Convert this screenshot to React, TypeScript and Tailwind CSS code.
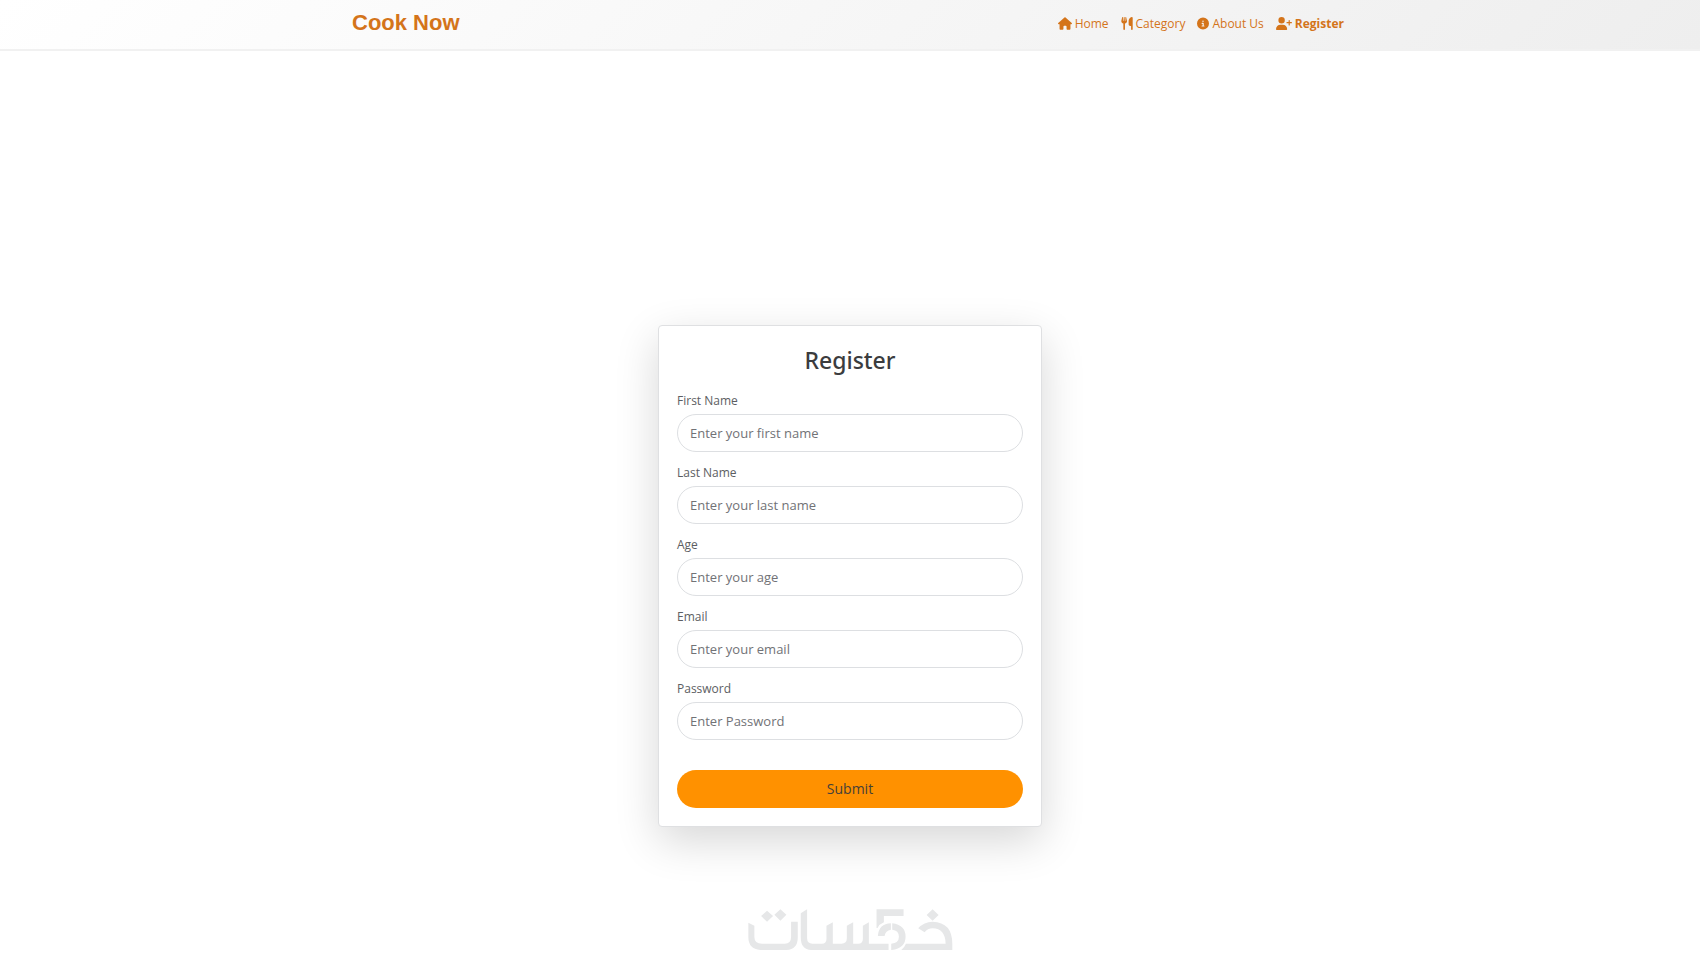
import { FaCircleInfo, FaHouse, FaUserPlus, FaUtensils } from "react-icons/fa6";

const links = [
  { label: "Home", Icon: FaHouse, iconWidth: "w-3.5", active: false },
  { label: "Category", Icon: FaUtensils, iconWidth: "w-3", active: false },
  { label: "About Us", Icon: FaCircleInfo, iconWidth: "w-3", active: false },
  { label: "Register", Icon: FaUserPlus, iconWidth: "w-4", active: true },
];

const fields = [
  { id: "first-name", label: "First Name", placeholder: "Enter your first name", type: "text" },
  { id: "last-name", label: "Last Name", placeholder: "Enter your last name", type: "text" },
  { id: "age", label: "Age", placeholder: "Enter your age", type: "text" },
  { id: "email", label: "Email", placeholder: "Enter your email", type: "email" },
  { id: "password", label: "Password", placeholder: "Enter Password", type: "password" },
];

function Logo() {
  return (
    <svg viewBox="38 42 614 124" className="w-[205px]" fill="#e6e7e8" role="img" aria-label="خمسات">
      <path d="M95 47 113 63 95 80 77 63zM135 43 153 59 135 77 117 59zM591 43 609 60 591 77 573 60z" />
      <path d="M39 83 57 92V126Q57 146 80 146H148Q167 146 167 126V80H187V128Q187 165 148 165H80Q39 165 39 126z" />
      <path d="M196 55 215 43V130Q215 146 231 146H259Q273 146 273 132V92L292 82V146H318Q334 146 334 130V92L353 82V146H368Q382 146 382 132V92L400 82V146H459V165H232Q196 165 196 128z" />
      <path d="M423 43H504V63H445V82Q432 87 426 99H423z" />
      <path d="M427 123Q430 86 466 85V104Q450 106 447 123z" />
      <path d="M470 85Q510 90 510 125T467 165V146Q490 144 490 125T470 104z" />
      <path d="M548 100Q565 80 591 80 650 82 650 146V165H497Q507 157 511 146H630Q629 101 591 100 576 100 567 112z" />
    </svg>
  );
}

export default function App() {
  return (
    <div className="flex min-h-screen flex-col bg-white font-['Open_Sans',sans-serif]">
      <header className="border-b-2 border-[#f1f1f1] bg-[linear-gradient(135deg,#ffffff,#eeeeee)] px-4">
        <div className="mx-auto flex h-[49px] max-w-[996px] items-center justify-between text-[#d4741a]">
          <a href="#" className="pb-1 font-['Liberation_Sans',sans-serif] text-[22px] font-bold">
            Cook Now
          </a>
          <nav className="flex items-center gap-3 pr-1 pb-0.5 text-xs">
            {links.map(({ label, Icon, iconWidth, active }) => (
              <a
                key={label}
                href="#"
                className={active ? "flex items-center gap-[3px] font-bold" : "flex items-center gap-[3px]"}
              >
                <Icon className={`h-[13px] shrink-0 ${iconWidth}`} />
                {label}
              </a>
            ))}
          </nav>
        </div>
      </header>

      <main className="flex grow flex-col items-center justify-end px-4 pb-[82px]">
        <form className="flex w-full max-w-[384px] flex-col rounded border border-[#dfe0e2] bg-white px-[18px] pt-4 pb-[18px] shadow-[0_14px_44px_rgba(0,0,0,0.16)]">
          <h1 className="mb-3.5 text-center font-['Noto_Sans',sans-serif] text-[23px] leading-9 font-medium text-[#3b3c3e]">
            Register
          </h1>
          {fields.map(({ id, label, placeholder, type }) => (
            <div key={id} className="mb-3 flex flex-col gap-1">
              <label htmlFor={id} className="text-xs leading-[18px] text-[#5c5e62]">
                {label}
              </label>
              <input
                id={id}
                type={type}
                placeholder={placeholder}
                className="h-[38px] w-full rounded-full border border-[#dddfe2] px-3 text-[13px] text-gray-800 placeholder:text-[#717276]"
              />
            </div>
          ))}
          <button type="submit" className="mt-[18px] h-[38px] rounded-full bg-[#ff9100] text-sm text-[#45403a]">
            Submit
          </button>
        </form>
      </main>

      <footer className="flex justify-center pb-5">
        <Logo />
      </footer>
    </div>
  );
}
